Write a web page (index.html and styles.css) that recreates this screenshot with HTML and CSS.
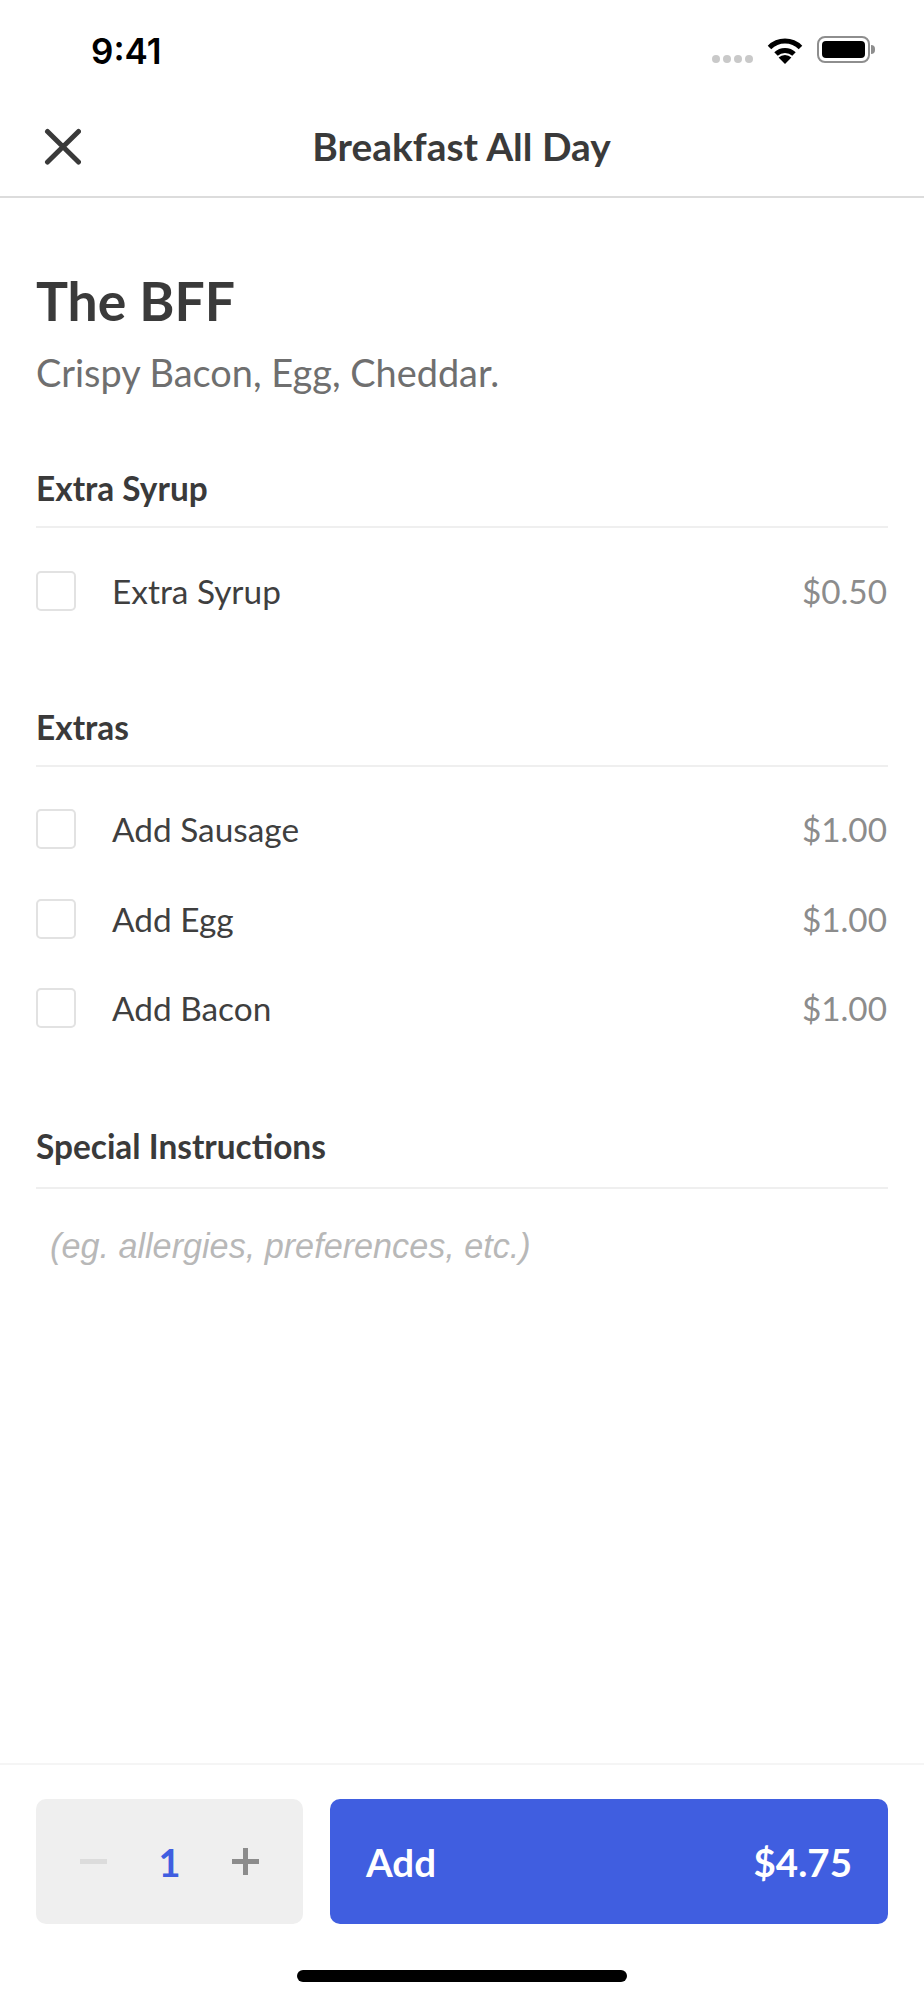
FILE: index.html
```html
<!DOCTYPE html>
<html lang="en">
<head>
<meta charset="utf-8">
<title>Breakfast All Day</title>
<link rel="stylesheet" href="styles.css">
</head>
<body>
<div class="screen">
  <div class="status">
    <span class="time">9:41</span>
    <div class="status-icons">
      <div class="dots"><i></i><i></i><i></i><i></i></div>
      <svg class="wifi" viewBox="0 0 36 27" aria-hidden="true">
        <path d="M2.5 10.5 A22 22 0 0 1 33.5 10.5" fill="none" stroke="#000" stroke-width="5"/>
        <path d="M9 17 A13 13 0 0 1 27 17" fill="none" stroke="#000" stroke-width="5"/>
        <path d="M18 27 L11.6 20.6 A9 9 0 0 1 24.4 20.6 Z" fill="#000"/>
      </svg>
      <div class="battery"><div class="battery-fill"></div></div>
      <div class="battery-cap"></div>
    </div>
  </div>
  <header class="nav">
    <svg class="close" viewBox="0 0 38 38" aria-hidden="true">
      <path d="M4.5 3.5 L35.5 34 M35.5 3.5 L4.5 34" fill="none" stroke="#3a3a3a" stroke-width="5" stroke-linecap="round"/>
    </svg>
    <h1 class="nav-title">Breakfast All Day</h1>
  </header>
  <main class="content">
    <h2 class="item-title">The BFF</h2>
    <p class="item-desc">Crispy Bacon, Egg, Cheddar.</p>

    <section class="group group-first">
      <h3 class="group-title">Extra Syrup</h3>
      <div class="option"><span class="box"></span><span class="label">Extra Syrup</span><span class="price">$0.50</span></div>
    </section>

    <section class="group group-second">
      <h3 class="group-title">Extras</h3>
      <div class="option"><span class="box"></span><span class="label">Add Sausage</span><span class="price">$1.00</span></div>
      <div class="option"><span class="box"></span><span class="label">Add Egg</span><span class="price">$1.00</span></div>
      <div class="option"><span class="box"></span><span class="label">Add Bacon</span><span class="price">$1.00</span></div>
    </section>

    <section class="group group-third">
      <h3 class="group-title">Special Instructions</h3>
      <div class="placeholder">(eg. allergies, preferences, etc.)</div>
    </section>
  </main>
  <footer class="footer">
    <div class="actions">
      <div class="stepper">
        <span class="minus"></span>
        <span class="qty">1</span>
        <span class="plus"></span>
      </div>
      <div class="add"><span>Add</span><span>$4.75</span></div>
    </div>
    <div class="home"></div>
  </footer>
</div>
</body>
</html>
```

FILE: styles.css
```css
* { box-sizing: border-box; }
html, body { margin: 0; padding: 0; background: #fff; }
.screen {
  width: 924px; height: 2000px; display: flex; flex-direction: column; overflow: hidden;
  font-family: Lato, "Liberation Sans", sans-serif; color: #3a3a3a;
}
.status { height: 100px; display: flex; justify-content: space-between; padding: 28px 49px 0 91px; }
.time { font-family: Inter, "Liberation Sans", sans-serif; font-weight: 600; font-size: 35px; line-height: 46px; color: #000; }
.status-icons { display: flex; align-items: flex-start; padding-top: 8px; }
.dots { display: flex; gap: 3px; margin-top: 19px; margin-right: 14px; }
.dots i { width: 8px; height: 8px; border-radius: 50%; background: #c9c9c9; }
.wifi { width: 36px; height: 27px; margin-top: 1px; margin-right: 14px; }
.battery { width: 53px; height: 27px; border: 2.5px solid #8e8e8e; border-radius: 8px; padding: 3px; }
.battery-fill { width: 100%; height: 100%; background: #000; border-radius: 4px; }
.battery-cap { width: 4px; height: 9px; margin: 9px 0 0 1px; background: #8e8e8e; border-radius: 0 4px 4px 0; }
.nav { height: 98px; position: relative; display: flex; align-items: center; justify-content: center; border-bottom: 2px solid #dcdcdc; padding-bottom: 4px; }
.close { position: absolute; left: 43px; top: 28px; width: 38px; height: 38px; }
.nav-title { margin: 0 0 0 -1px; font-size: 38.9px; font-weight: 700; line-height: 44px; color: #3a3a3a; }
.content { flex: 1; padding: 0 36px; }
.item-title { margin: 67px 0 0; font-size: 53.5px; font-weight: 700; line-height: 70px; }
.item-desc { margin: 14px 0 0; font-size: 37.9px; line-height: 48px; color: #6f6f6f; }
.group-title { margin: 0; font-size: 33.4px; font-weight: 700; line-height: 40px; height: 60px; border-bottom: 2px solid #efefef; }
.group-first { margin-top: 71px; }
.group-second { margin-top: 71px; }
.group-third { margin-top: 73px; }
.group-third .group-title { height: 63px; }
.option { height: 89.5px; display: flex; align-items: center; }
.group .group-title + .option { margin-top: 18px; }
.box { width: 40px; height: 40px; border: 2px solid #e2e2e2; border-radius: 5px; margin-right: 36px; flex: none; }
.label { flex: 1; font-size: 33.4px; color: #3f3f3f; }
.price { font-size: 33.3px; color: #8c8c8c; margin-right: 1px; }
.placeholder { margin: 37px 0 0 14px; font-family: "Liberation Sans", sans-serif; font-style: italic; font-size: 34.2px; line-height: 40px; color: #b8b8b8; }
.footer { height: 237px; border-top: 2px solid #f5f5f5; padding: 34px 36px 0; display: flex; flex-direction: column; }
.actions { display: flex; gap: 27px; height: 125px; }
.stepper { width: 267px; border-radius: 10px; background: #efefef; display: flex; align-items: center; padding: 0 44px; justify-content: space-between; }
.minus { width: 27px; height: 5px; background: #dcdcdc; }
.plus { width: 27px; height: 27px; background: linear-gradient(#8c8c8c, #8c8c8c) center / 100% 5px no-repeat, linear-gradient(#8c8c8c, #8c8c8c) center / 5px 100% no-repeat; }
.qty { font-size: 38px; font-weight: 700; color: #405ee0; line-height: 44px; }
.add { flex: 1; border-radius: 10px; background: #405ee0; color: #fff; display: flex; align-items: center; justify-content: space-between; padding: 0 36px 0 36px; font-size: 38.5px; font-weight: 700; line-height: 44px; }
.home { width: 330px; height: 12px; border-radius: 6px; background: #000; margin: 46px auto 0; }
```
